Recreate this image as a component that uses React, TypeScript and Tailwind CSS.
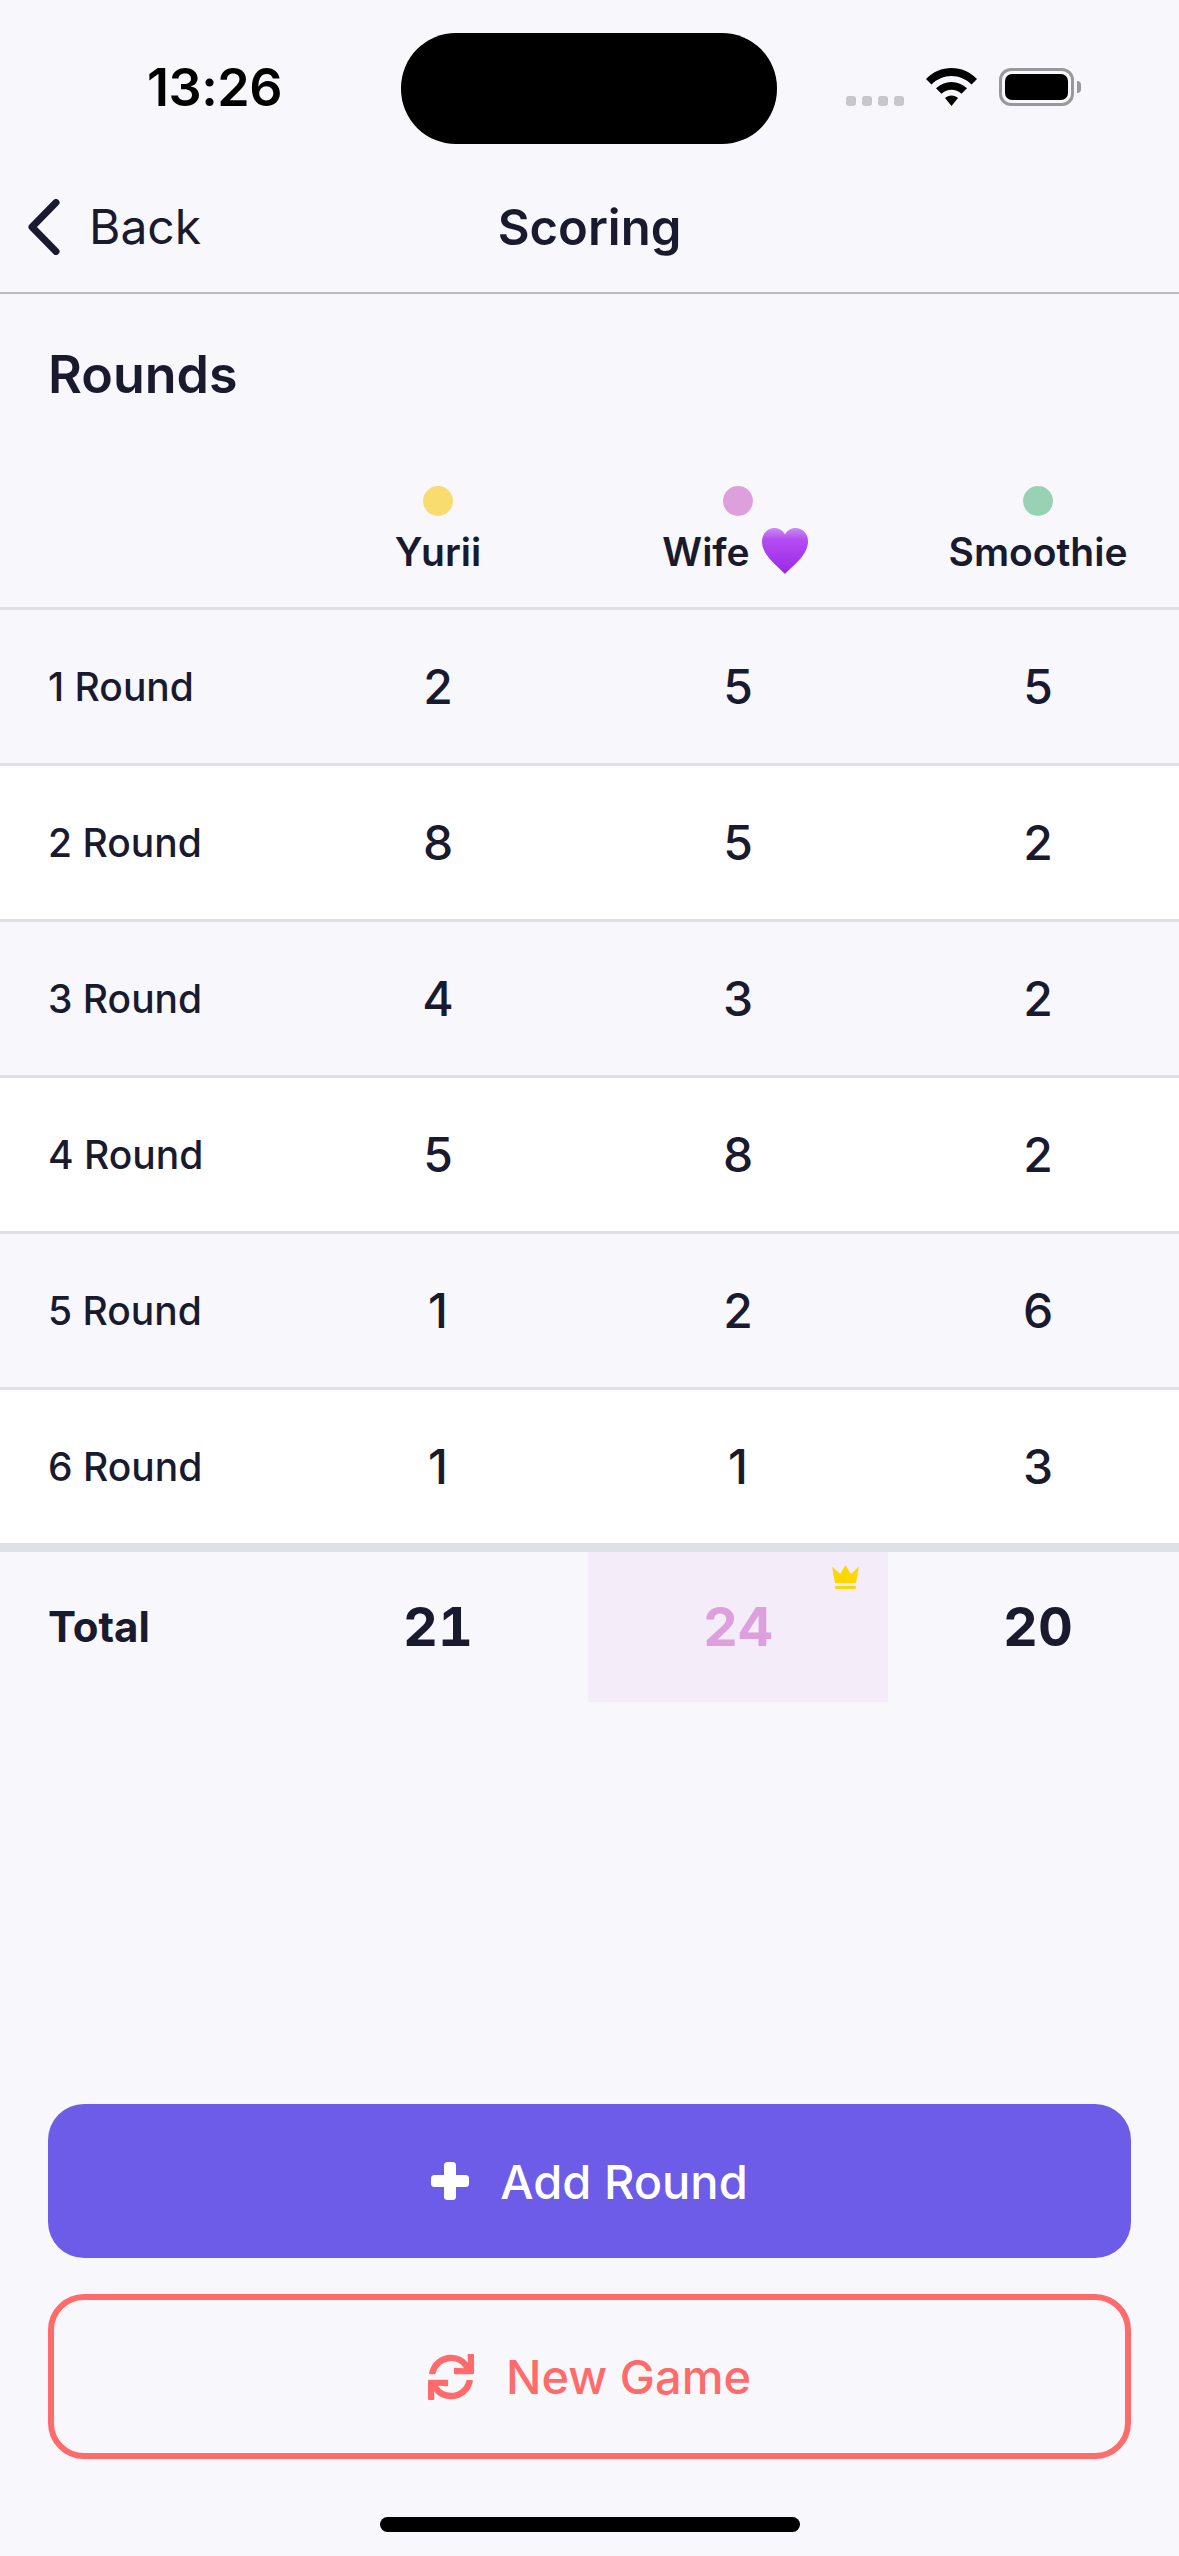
import React from "react";
import { FaSync } from "react-icons/fa";

const rows = [
  ["1 Round", 2, 5, 5],
  ["2 Round", 8, 5, 2],
  ["3 Round", 4, 3, 2],
  ["4 Round", 5, 8, 2],
  ["5 Round", 1, 2, 6],
  ["6 Round", 1, 1, 3],
];

function Heart() {
  return (
    <svg viewBox="0 0 46 46" className="w-[46px] h-[46px] ml-[12px] mr-[6px] shrink-0">
      <defs>
        <linearGradient id="hg" x1="0" y1="0" x2="0" y2="1">
          <stop offset="0" stopColor="#c98bf5" />
          <stop offset="0.25" stopColor="#b44cf2" />
          <stop offset="1" stopColor="#9a28e6" />
        </linearGradient>
      </defs>
      <path
        d="M23 46C17 39 0 28 0 13.500 0 5.500 5.500 0 12.500 0 17 0 21 2.500 23 6.500 25 2.500 29 0 33.500 0 40.500 0 46 5.500 46 13.500 46 28 29 39 23 46Z"
        fill="url(#hg)"
      />
    </svg>
  );
}

function Wifi() {
  return (
    <svg viewBox="0 0 51 38" className="w-[51px] h-[38px]">
      <path d="M25.500 0C35 0 44 3.700 51 11L45.500 16.500C40 11 33 8 25.500 8S11 11 5.500 16.500L0 11C7 3.700 16 0 25.500 0Z" fill="#000" />
      <path d="M25.500 14C31.500 14 36.800 16.300 41 20.300L35.500 25.800C32.700 23.200 29.200 21.800 25.500 21.800S18.300 23.200 15.500 25.800L10 20.300C14.200 16.300 19.500 14 25.500 14Z" fill="#000" />
      <path d="M25.500 27.500C28 27.500 30.200 28.400 32 30L25.500 38 19 30C20.800 28.400 23 27.500 25.500 27.500Z" fill="#000" />
    </svg>
  );
}

function Battery() {
  return (
    <div className="flex items-center">
      <div className="w-[75px] h-[38px] rounded-[12px] border-[3px] border-[#98989d] p-[3px]">
        <div className="w-full h-full rounded-[7px] bg-black" />
      </div>
      <div className="w-[4px] h-[12px] rounded-r-full bg-[#98989d] ml-[3px]" />
    </div>
  );
}

function Plus() {
  return (
    <svg viewBox="0 0 38 38" className="w-[38px] h-[38px] mr-[31px] shrink-0">
      <rect x="13" y="0" width="12" height="38" rx="3.500" fill="#fff" />
      <rect x="0" y="13" width="38" height="12" rx="3.500" fill="#fff" />
    </svg>
  );
}

function Crown() {
  return (
    <svg viewBox="3 4 18 16" className="absolute top-[13px] right-[29px] w-[27px] h-[24px]">
      <path d="M5 16L3 5l5.500 5L12 4l3.500 6L21 5l-2 11H5m14 3c0 .6-.4 1-1 1H6c-.6 0-1-.4-1-1v-1h14v1z" fill="#ffd700" />
    </svg>
  );
}

export default function App() {
  return (
    <div
      className="w-[1179px] h-[2556px] overflow-hidden flex flex-col bg-[#f8f8fc] text-[#1a1a2e]"
      style={{ fontFamily: "Inter, 'Liberation Sans', sans-serif" }}
    >
      {/* Status bar */}
      <div className="h-[150px] shrink-0 flex pt-[33px]">
        <div className="w-[401px] h-[111px] flex items-center justify-center pl-[28px] pb-[1px]">
          <span className="text-[52px] leading-none font-semibold text-black tracking-[-0.5px]">13:26</span>
        </div>
        <div className="w-[376px] h-[111px] rounded-[55px] bg-black" />
        <div className="flex items-start pt-[35px] pl-[69px]">
          <div className="flex gap-[6px] mt-[28px]">
            {[0, 1, 2, 3].map((i) => (
              <div key={i} className="w-[10px] h-[10px] rounded-[3px] bg-[#c7c7cc]" />
            ))}
          </div>
          <div className="ml-[22px]"><Wifi /></div>
          <div className="ml-[22px]"><Battery /></div>
        </div>
      </div>

      {/* Nav */}
      <div className="h-[144px] shrink-0 border-b-2 border-[#bcbcc0] flex items-center justify-between pl-[28px] pt-[12px] relative">
        <div className="flex items-center">
          <svg viewBox="0 0 32 56" className="w-[32px] h-[56px]">
            <path d="M28 3.500L4 28L28 52.500" fill="none" stroke="#1a1a2e" strokeWidth="7" strokeLinecap="round" strokeLinejoin="round" />
          </svg>
          <span className="ml-[29px] text-[48px] leading-none">Back</span>
        </div>
        <span className="absolute left-0 right-0 text-center text-[49px] leading-none font-semibold">Scoring</span>
      </div>

      {/* Title */}
      <div className="pl-[48px] pt-[50px] h-[173px] shrink-0">
        <h2 className="text-[52px] leading-[62px] font-semibold">Rounds</h2>
      </div>

      {/* Player header */}
      <div className="grid grid-cols-[288px_300px_300px_300px] h-[143px] pt-[19px] shrink-0 border-b-[3px] border-[#e0e0e8]">
        <div />
        {[
          ["Yurii", "bg-[#f9dc6f]"],
          ["Wife", "bg-[#dda0dd]"],
          ["Smoothie", "bg-[#98d1b3]"],
        ].map(([name, color]) => (
          <div key={name} className="flex flex-col items-center">
            <div className={`w-[30px] h-[30px] rounded-full ${color}`} />
            <div className="flex items-center h-[46px] mt-[12px] text-[39px] leading-none font-semibold">
              <span>{name}</span>
              {name === "Wife" && <Heart />}
            </div>
          </div>
        ))}
      </div>

      {/* Rows */}
      {rows.map((r, i) => (
        <div
          key={i}
          className={`grid grid-cols-[288px_300px_300px_300px] items-center shrink-0 ${
            i === 5 ? "h-[162px] border-b-[9px]" : "h-[156px] border-b-[3px]"
          } border-[#e0e0e8] ${i % 2 === 1 ? "bg-white" : ""}`}
        >
          <div className="pl-[48px] text-[39px] leading-none font-medium">{r[0]}</div>
          {r.slice(1).map((v, j) => (
            <div key={j} className="text-center text-[48px] leading-none font-medium">{v}</div>
          ))}
        </div>
      ))}

      {/* Total */}
      <div className="grid grid-cols-[288px_300px_300px_300px] items-stretch h-[150px] shrink-0">
        <div className="pl-[48px] flex items-center text-[42px] leading-none font-bold">Total</div>
        <div className="flex items-center justify-center text-[54px] leading-none font-bold tabular-nums">21</div>
        <div className="relative flex items-center justify-center text-[54px] leading-none font-bold tabular-nums text-[#dda0dd] bg-[#f4edf9]">
          24
          <Crown />
        </div>
        <div className="flex items-center justify-center text-[54px] leading-none font-bold tabular-nums">20</div>
      </div>

      {/* Actions */}
      <div className="mt-auto px-[48px] flex flex-col">
        <button className="h-[154px] rounded-[36px] bg-[#6c5ce7] text-white flex items-center justify-center text-[47px] leading-none font-medium">
          <Plus />
          Add Round
        </button>
        <button className="mt-[36px] h-[165px] rounded-[36px] border-[6px] border-[#ff6b6b] text-[#ff6b6b] flex items-center justify-center text-[47px] leading-none font-medium">
          <FaSync className="text-[46px] mr-[32px]" />
          New Game
        </button>
      </div>

      {/* Home indicator */}
      <div className="h-[97px] shrink-0 flex justify-center pt-[58px]">
        <div className="w-[420px] h-[15px] rounded-full bg-black" />
      </div>
    </div>
  );
}
